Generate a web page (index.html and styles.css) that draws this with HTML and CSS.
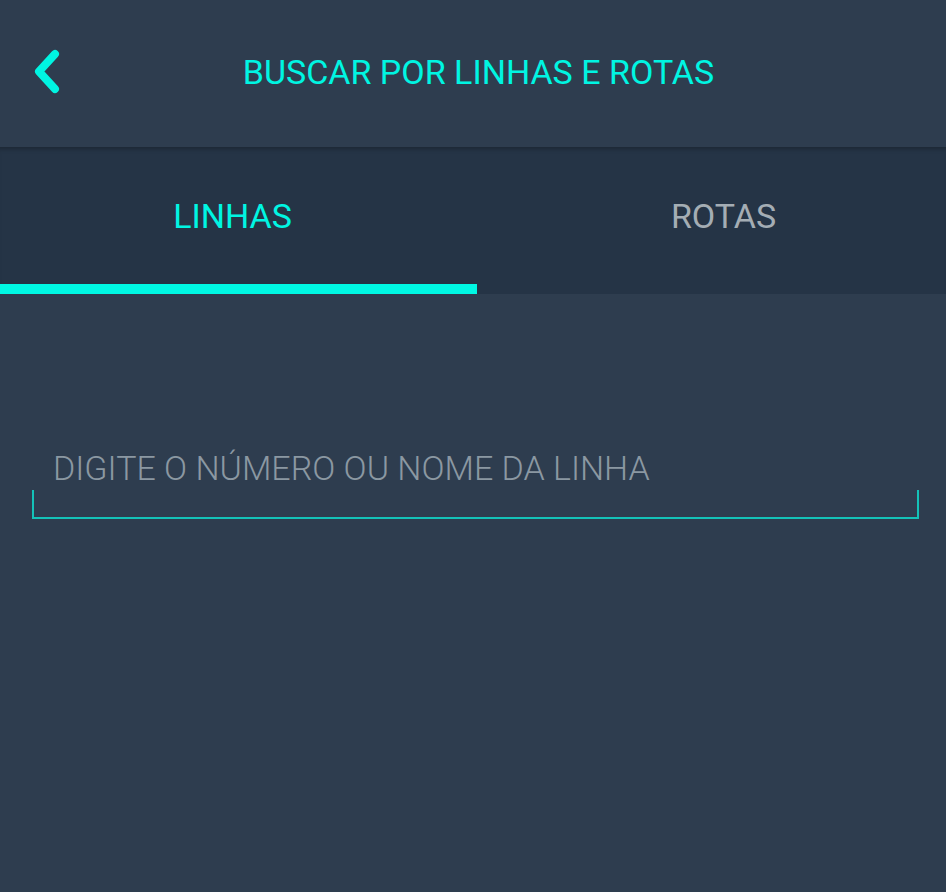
FILE: index.html
```html
<!DOCTYPE html>
<html lang="pt">
<head>
<meta charset="utf-8">
<link rel="stylesheet" href="styles.css">
</head>
<body>
<div class="app">
  <header class="topbar">
    <button class="back" aria-label="Voltar">
      <svg width="30" height="46" viewBox="0 0 30 46"><path d="M24 5 L8 22.5 L24 40" fill="none" stroke="#00f5e2" stroke-width="8" stroke-linecap="round" stroke-linejoin="round"/></svg>
    </button>
    <h1 class="title">BUSCAR POR LINHAS E ROTAS</h1>
  </header>
  <nav class="tabs">
    <div class="tab active">LINHAS</div>
    <div class="tab">ROTAS</div>
  </nav>
  <main class="content">
    <label class="field">
      <input class="input" type="text" placeholder="DIGITE O NÚMERO OU NOME DA LINHA">
    </label>
  </main>
</div>
</body>
</html>
```
FILE: styles.css
```css
html, body {
  margin: 0;
  padding: 0;
  height: 100%;
  background: #2e3d4f;
  font-family: Roboto, "Liberation Sans", sans-serif;
}
.app {
  min-height: 892px;
  background: #2e3d4f;
}
.topbar {
  height: 147px;
  display: flex;
  align-items: center;
  justify-content: center;
  position: relative;
  background: #2e3d4f;
}
.back {
  position: absolute;
  left: 31px;
  top: 49px;
  background: none;
  border: 0;
  padding: 0;
  width: 30px;
  height: 46px;
}
.back svg { display: block; }
.title {
  margin: 0 0 4px 11px;
  font-weight: 400;
  font-size: 34px;
  color: #00f5e2;
  letter-spacing: 0;
}
.tabs {
  height: 147px;
  display: flex;
  background: #253446;
  box-shadow: inset 0 5px 4px -3px rgba(0,0,0,0.25);
}
.tab {
  flex: 0 0 477px;
  display: flex;
  align-items: center;
  justify-content: center;
  font-size: 34px;
  color: #a4adb4;
  box-sizing: border-box;
  padding-bottom: 0;
  border-bottom: 10px solid transparent;
}
.tab.active {
  padding-right: 12px;
}
.tab + .tab {
  flex: 1 1 auto;
  padding-left: 24px;
}
.tab.active {
  color: #00f5e2;
  border-bottom-color: #00f8e4;
}
.content {
  padding: 146px 27px 0 32px;
}
.field {
  display: block;
  height: 77px;
  border: 2px solid #14c2b8;
  border-top: 0;
  border-bottom-width: 2px;
  position: relative;
}
.field::before {
  content: "";
  position: absolute;
  left: -2px;
  right: -2px;
  top: 0;
  height: 50px;
  background: #2e3d4f;
}
.input {
  position: relative;
  z-index: 1;
  background: transparent;
  border: 0;
  outline: none;
  width: 100%;
  box-sizing: border-box;
  padding: 8px 0 0 19px;
  font-family: Roboto, "Liberation Sans", sans-serif;
  font-weight: 300;
  font-size: 34px;
  color: #c0c8cf;
}
.input::placeholder {
  color: #8b98a2;
  opacity: 1;
}
```
